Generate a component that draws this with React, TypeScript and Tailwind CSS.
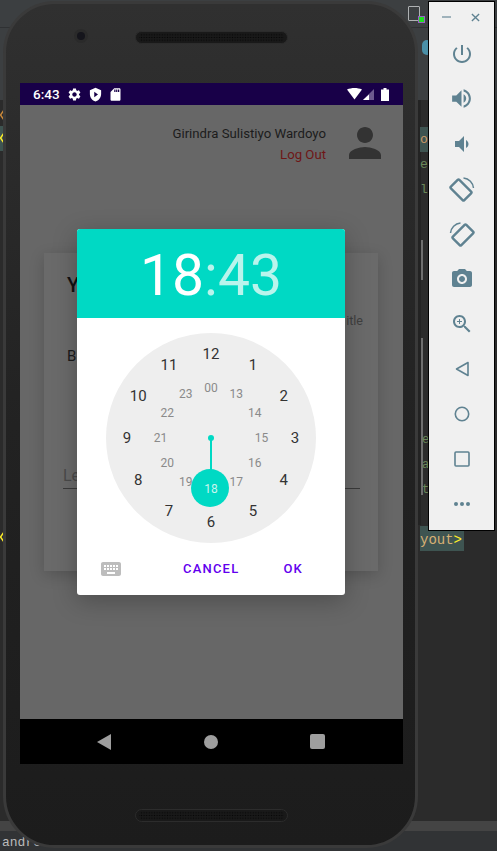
import React from "react";

const TOOL = "#5f8291";

function Icon({ d, size = 24, fill = TOOL, className = "" }: { d: string; size?: number; fill?: string; className?: string }) {
  return (
    <svg width={size} height={size} viewBox="0 0 24 24" className={className}>
      <path d={d} fill={fill} fillRule="evenodd" />
    </svg>
  );
}

const P = {
  power: "M13 3h-2v10h2V3zm4.83 2.17l-1.42 1.42C17.99 7.86 19 9.81 19 12c0 3.87-3.13 7-7 7s-7-3.13-7-7c0-2.19 1.01-4.14 2.58-5.42L6.17 5.17C4.23 6.82 3 9.26 3 12c0 4.97 4.03 9 9 9s9-4.03 9-9c0-2.74-1.23-5.18-3.17-6.83z",
  volUp: "M3 9v6h4l5 5V4L7 9H3zm13.5 3c0-1.77-1.02-3.29-2.5-4.03v8.05c1.48-.73 2.5-2.25 2.5-4.02zM14 3.23v2.06c2.89.86 5 3.54 5 6.71s-2.11 5.85-5 6.71v2.06c4.01-.91 7-4.49 7-8.77s-2.99-7.86-7-8.77z",
  volDown: "M18.5 12c0-1.77-1.02-3.29-2.5-4.03v8.05c1.48-.73 2.5-2.25 2.5-4.02zM5 9v6h4l5 5V4L9 9H5z",
  camera: "M9 2L7.17 4H4c-1.1 0-2 .9-2 2v12c0 1.1.9 2 2 2h16c1.1 0 2-.9 2-2V6c0-1.1-.9-2-2-2h-3.17L15 2H9zm3 15c-2.76 0-5-2.24-5-5s2.24-5 5-5 5 2.24 5 5-2.24 5-5 5zm0-2c1.66 0 3-1.34 3-3s-1.34-3-3-3-3 1.34-3 3 1.34 3 3 3z",
  zoom: "M15.5 14h-.79l-.28-.27C15.41 12.59 16 11.11 16 9.5 16 5.91 13.09 3 9.5 3S3 5.91 3 9.5 5.91 16 9.5 16c1.61 0 3.09-.59 4.23-1.57l.27.28v.79l5 4.99L20.49 19l-4.99-5zm-6 0C7.01 14 5 11.99 5 9.5S7.01 5 9.5 5 14 7.01 14 9.5 11.99 14 9.5 14zM12 10h-2v2H9v-2H7V9h2V7h1v2h2v1z",
  person: "M12 12c2.21 0 4-1.79 4-4s-1.79-4-4-4-4 1.79-4 4 1.79 4 4 4zm0 2c-2.67 0-8 1.34-8 4v2h16v-2c0-2.66-5.33-4-8-4z",
  gear: "M19.14,12.94c0.04-0.3,0.06-0.61,0.06-0.94c0-0.32-0.02-0.64-0.07-0.94l2.03-1.58c0.18-0.14,0.23-0.41,0.12-0.61l-1.92-3.32c-0.12-0.22-0.37-0.29-0.59-0.22l-2.39,0.96c-0.5-0.38-1.03-0.7-1.62-0.94L14.4,2.81c-0.04-0.24-0.24-0.41-0.48-0.41h-3.84c-0.24,0-0.43,0.17-0.47,0.41L9.25,5.35C8.66,5.59,8.12,5.92,7.63,6.29L5.24,5.33c-0.22-0.08-0.47,0-0.59,0.22L2.74,8.87C2.62,9.08,2.66,9.34,2.86,9.48l2.03,1.58C4.84,11.36,4.8,11.69,4.8,12s0.02,0.64,0.07,0.94l-2.03,1.58c-0.18,0.14-0.23,0.41-0.12,0.61l1.92,3.32c0.12,0.22,0.37,0.29,0.59,0.22l2.39-0.96c0.5,0.38,1.03,0.7,1.62,0.94l0.36,2.54c0.05,0.24,0.24,0.41,0.48,0.41h3.84c0.24,0,0.44-0.17,0.47-0.41l0.36-2.54c0.59-0.24,1.13-0.56,1.62-0.94l2.39,0.96c0.22,0.08,0.47,0,0.59-0.22l1.92-3.32c0.12-0.22,0.07-0.47-0.12-0.61L19.14,12.94z M12,15.6c-1.98,0-3.6-1.62-3.6-3.6s1.62-3.6,3.6-3.6s3.6,1.62,3.6,3.6S13.98,15.6,12,15.6z",
  shield: "M12 1L3 5v6c0 5.55 3.84 10.74 9 12 5.16-1.26 9-6.45 9-12V5l-9-4zm-2 6.5l6 4.5-6 4.5v-9z",
  sd: "M18 2h-8L4.02 8 4 20c0 1.1.9 2 2 2h12c1.1 0 2-.9 2-2V4c0-1.1-.9-2-2-2zm-6 6h-2V4h2v4zm3 0h-2V4h2v4zm3 0h-2V4h2v4z",
  keyboard: "M20 5H4c-1.1 0-1.99.9-1.99 2L2 17c0 1.1.9 2 2 2h16c1.1 0 2-.9 2-2V7c0-1.1-.9-2-2-2zm-9 3h2v2h-2V8zm0 3h2v2h-2v-2zM8 8h2v2H8V8zm0 3h2v2H8v-2zm-1 2H5v-2h2v2zm0-3H5V8h2v2zm9 7H8v-2h8v2zm0-4h-2v-2h2v2zm0-3h-2V8h2v2zm3 3h-2v-2h2v2zm0-3h-2V8h2v2z",
};

function Rotate({ flip }: { flip?: boolean }) {
  return (
    <svg width="26" height="26" viewBox="0 0 26 26" className={flip ? "-scale-x-100" : ""}>
      <g transform="rotate(-45 12 14)">
        <rect x="6" y="4.500" width="12" height="19" rx="1.200" fill="none" stroke={TOOL} strokeWidth="2.400" />
      </g>
      <path d="M14.500 2 C20 2.500 24 7 24.500 12" fill="none" stroke={TOOL} strokeWidth="1.500" />
    </svg>
  );
}

function Speaker() {
  return (
    <svg width="153" height="13" viewBox="0 0 153 13" className="block">
      <defs>
        <pattern id="dots" width="2.600" height="2.600" patternUnits="userSpaceOnUse">
          <circle cx="1.300" cy="1.300" r="0.700" fill="#070707" />
        </pattern>
      </defs>
      <rect x="0.500" y="0.500" width="152" height="12" rx="6" fill="#191919" stroke="#2c2c2c" />
      <rect x="4" y="2" width="145" height="9" rx="4.500" fill="url(#dots)" />
    </svg>
  );
}

function Numeral({ angle, r, label, cls }: { angle: number; r: number; label: string; cls: string }) {
  const a = (angle * Math.PI) / 180;
  const left = 105 + r * Math.sin(a);
  const top = 105 - r * Math.cos(a);
  return (
    <span className={`absolute -translate-x-1/2 -translate-y-1/2 leading-none ${cls}`} style={{ left, top }}>
      {label}
    </span>
  );
}

function Clock() {
  const outer = ["12", "1", "2", "3", "4", "5", "6", "7", "8", "9", "10", "11"];
  const inner = ["00", "13", "14", "15", "16", "17", "18", "19", "20", "21", "22", "23"];
  return (
    <div className="relative w-[210px] h-[210px] rounded-full bg-[#eeeeee] font-['Roboto',sans-serif]">
      <span className="absolute left-[102px] top-[102px] w-[6px] h-[6px] rounded-full bg-[#00d9c4]" />
      <span className="absolute left-[104px] top-[105px] w-[2px] h-[34px] bg-[#00d9c4]" />
      <span className="absolute left-[85px] top-[136px] w-[38px] h-[38px] rounded-full bg-[#00d9c4]" />
      {outer.map((n, i) => (
        <Numeral key={n} angle={i * 30} r={84} label={n} cls="text-[15px] text-[#333333]" />
      ))}
      {inner.map((n, i) => (
        <Numeral
          key={n}
          angle={i * 30}
          r={50.5}
          label={n}
          cls={n === "18" ? "text-[12px] text-[#c9f5ef]" : "text-[12px] text-[#8a8a8a]"}
        />
      ))}
    </div>
  );
}

function Dialog() {
  return (
    <div className="absolute left-[57px] top-[146px] w-[268px] h-[366px] rounded-[3px] overflow-hidden bg-white flex flex-col font-['Roboto',sans-serif] shadow-[0_6px_24px_rgba(0,0,0,0.25)]">
      <div className="h-[89px] pt-[4px] bg-[#00d9c4] flex items-center justify-center text-[57px] leading-none text-white">
        <span>18</span>
        <span className="text-[#b9f4ec]">:43</span>
      </div>
      <div className="flex justify-center pt-[15px]">
        <Clock />
      </div>
      <div className="flex items-center mt-[14px] pl-[22px]">
        <Icon d={P.keyboard} size={24} fill="#bdbdbd" />
        <span className="ml-[60px] text-[13px] font-medium tracking-[1.200px] text-[#6200ee]">CANCEL</span>
        <span className="ml-[44px] text-[13px] font-medium tracking-[1.200px] text-[#6200ee]">OK</span>
      </div>
    </div>
  );
}

function Screen() {
  return (
    <div className="relative mx-[17px] mt-[82px] w-[383px] h-[681px] flex flex-col font-['Roboto',sans-serif]">
      <div className="h-[22px] bg-[#180048] flex items-center pl-[13px] pr-[14px] text-white">
        <span className="text-[13.500px] font-medium w-[30px]">6:43</span>
        <Icon d={P.gear} size={15} fill="#ffffff" className="ml-[4px]" />
        <Icon d={P.shield} size={15} fill="#ffffff" className="ml-[6px]" />
        <Icon d={P.sd} size={15} fill="#ffffff" className="ml-[5px]" />
        <div className="flex-1" />
        <svg width="15" height="12" viewBox="0 0 15 12"><path d="M0 1.500C4.500-.5 10.500-.5 15 1.500L7.500 11.500Z" fill="#fff" /></svg>
        <svg width="12" height="11" viewBox="0 0 12 11" className="ml-[1px]"><path d="M11 0V11H0Z" fill="#6d5a8e" /><path d="M6 5.500V11H0Z" fill="#fff" /></svg>
        <svg width="8" height="13" viewBox="0 0 8 13" className="ml-[6px]"><path d="M2.500 0h3v1.500H8V13H0V1.500h2.500Z" fill="#fff" /></svg>
      </div>
      <div className="relative flex-1 bg-[#676767]">
        <div className="flex justify-end pr-[22px] pt-[18px]">
          <div className="flex flex-col items-end text-[13.200px] leading-[21px] text-[#1c1c1c] pr-[55px]">
            <span>Girindra Sulistiyo Wardoyo</span>
            <span className="text-[#6e1616]">Log Out</span>
          </div>
          <div className="absolute right-[14px] top-[14px]">
            <Icon d={P.person} size={48} fill="#333333" />
          </div>
        </div>
        <div className="mx-[24px] mt-[88px] w-[334px] h-[318px] bg-[#6a6a6a] shadow-[0_4px_14px_rgba(0,0,0,0.18)] px-[23px] pt-[20px] text-[#111111]">
          <div className="text-[20px] font-medium leading-[24px]">Y</div>
          <div className="text-right text-[12.500px] text-[#3f3f3f] leading-[15px] mt-[16px] -mr-[8px]">itle</div>
          <div className="text-[15px] leading-[18px] mt-[19px] text-[#1a1a1a]">B</div>
          <div className="mt-[97px] -ml-[4px] -mr-[5px] h-[27px] border-b border-[#3a3a3a] text-[16px] leading-[27px] text-[#4a4a4a]">Le</div>
        </div>
      </div>
      <div className="h-[45px] bg-black flex items-center">
        <svg width="14" height="16" viewBox="0 0 14 16" className="ml-[77px]"><path d="M14 0V16L0 8Z" fill="#9e9e9e" /></svg>
        <span className="ml-[93px] w-[14px] h-[14px] rounded-full bg-[#9e9e9e]" />
        <span className="ml-[92px] w-[15px] h-[15px] rounded-[2px] bg-[#9e9e9e]" />
      </div>
      <Dialog />
    </div>
  );
}

function Phone() {
  return (
    <div className="absolute left-[3px] top-[1px] w-[415px] h-[847px] rounded-[52px] border-[3px] border-[#3a3a3a] bg-gradient-to-b from-[#303030] via-[#222222] to-[#1c1c1c] overflow-hidden">
      <div className="absolute left-[68px] top-[25px] w-[14px] h-[14px] rounded-full bg-[#2a2a2a] flex items-center justify-center">
        <span className="w-[8px] h-[8px] rounded-full bg-[#15151c]" />
      </div>
      <div className="absolute left-[129px] top-[27px]"><Speaker /></div>
      <div className="absolute left-[129px] top-[805px]"><Speaker /></div>
      <div className="-ml-[3px] -mt-[3px]"><Screen /></div>
    </div>
  );
}

function ToolPanel() {
  const row = "h-[45px] flex items-center justify-center";
  return (
    <div className="absolute left-[428px] top-[1px] w-[67px] h-[530px] bg-[#f0f0f0] border-[1.500px] border-black flex flex-col items-center">
      <div className="w-full h-[28px] mt-[1px] flex items-center justify-between pl-[13px] pr-[14px]">
        <span className="w-[9px] h-[2px] bg-[#9fb2bb]" />
        <svg width="9" height="9" viewBox="0 0 10 10"><path d="M1 1L9 9M9 1L1 9" stroke={TOOL} strokeWidth="1.500" /></svg>
      </div>
      <div className="w-full flex flex-col">
        <div className={row}><Icon d={P.power} size={24} /></div>
        <div className={row}><Icon d={P.volUp} size={25} /></div>
        <div className={row}><Icon d={P.volDown} size={24} /></div>
        <div className={row}><Rotate /></div>
        <div className={row}><Rotate flip /></div>
        <div className={row}><Icon d={P.camera} size={24} /></div>
        <div className={row}><Icon d={P.zoom} size={24} /></div>
        <div className={row}>
          <svg width="14" height="16" viewBox="0 0 14 16"><path d="M13 1.500V14.500L1.500 8Z" fill="none" stroke={TOOL} strokeWidth="1.600" strokeLinejoin="round" /></svg>
        </div>
        <div className={row}>
          <svg width="16" height="16" viewBox="0 0 16 16"><circle cx="8" cy="8" r="6.700" fill="none" stroke={TOOL} strokeWidth="1.600" /></svg>
        </div>
        <div className={row}>
          <svg width="16" height="16" viewBox="0 0 16 16"><rect x="1" y="1" width="14" height="14" rx="1" fill="none" stroke={TOOL} strokeWidth="1.600" /></svg>
        </div>
        <div className={`${row} gap-[2px]`}>
          <span className="w-[4px] h-[4px] rounded-full bg-[#5f8291]" />
          <span className="w-[4px] h-[4px] rounded-full bg-[#5f8291]" />
          <span className="w-[4px] h-[4px] rounded-full bg-[#5f8291]" />
        </div>
      </div>
    </div>
  );
}

function Chevron({ top, color }: { top: number; color: string }) {
  return (
    <svg width="4" height="10" viewBox="0 0 4 10" className="absolute left-0" style={{ top }}>
      <path d="M4 0L0.500 5L4 10" fill="none" stroke={color} strokeWidth="1.500" />
    </svg>
  );
}

function IdeBackdrop() {
  return (
    <>
      <div className="absolute left-0 top-0 w-full h-[100px] bg-[#3c3f41]" />
      <div className="absolute left-0 top-[27px] w-full h-px bg-[#2f3133]" />
      <div className="absolute left-0 top-[126px] w-[4px] h-[25px] bg-[#3e5451]" />
      <Chevron top={110} color="#cc8a3a" />
      <Chevron top={133} color="#ffef28" />
      <Chevron top={532} color="#ffef28" />

      <div className="absolute left-[418px] top-[100px] w-[3px] h-[425px] bg-[#232323]" />
      <div className="absolute left-[421px] top-[240px] w-[2px] h-[40px] bg-[#6f6f6f]" />
      <div className="absolute left-[421px] top-[338px] w-[2px] h-[157px] bg-[#6f6f6f]" />
      <div className="absolute left-[420px] top-[127px] w-[9px] h-[25px] bg-[#3e5451]" />

      <div className="absolute left-[420px] top-[127px] w-[9px] h-[75px] overflow-hidden font-['Liberation_Mono',monospace] text-[13px] text-[#6a8759] leading-[25px]">
        <div className="text-[#cc9966]">o</div>
        <div>e</div>
        <div>l</div>
      </div>
      <div className="absolute left-[422px] top-[428px] w-[7px] h-[75px] overflow-hidden font-['Liberation_Mono',monospace] text-[12px] text-[#6a8759] leading-[25px]">
        <div>e</div>
        <div>a</div>
        <div>t</div>
      </div>

      <div className="absolute left-[420px] top-[526px] w-[44px] h-[25px] pt-[1px] bg-[#3e5451] font-['Liberation_Mono',monospace] text-[14px] leading-[26px] text-[#d7b074] whitespace-nowrap">
        yout<span className="text-[#ffef28]">&gt;</span>
      </div>

      <div className="absolute left-0 top-[821px] w-full h-[10px] bg-[#444444]" />
      <div className="absolute left-0 top-[831px] w-full h-[20px] bg-[#313335]" />
      <div className="absolute left-[2px] top-[835px] font-['Liberation_Mono',monospace] text-[13px] text-[#bbbbbb] leading-[15px]">andro</div>

      <div className="absolute left-[408px] top-[6px] w-[12px] h-[15px] border border-[#aeb1b3] rounded-[1px]" />
      <span className="absolute left-[419px] top-[17px] w-[5px] h-[5px] bg-[#1fe01f] outline outline-[#9a5fc7]" />
      <span className="absolute left-[422px] top-[40px] w-[10px] h-[15px] rounded-full bg-[#4a90a8]" />
    </>
  );
}

export default function App() {
  return (
    <div className="relative w-[497px] h-[851px] overflow-hidden bg-[#2b2b2b]">
      <IdeBackdrop />
      <Phone />
      <ToolPanel />
    </div>
  );
}
